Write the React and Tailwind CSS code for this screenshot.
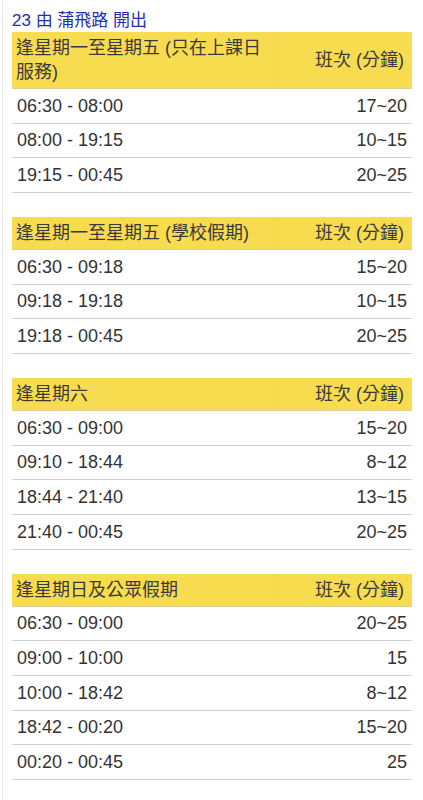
const tables = [
  {
    title: "逢星期一至星期五 (只在上課日服務)",
    rows: [
      ["06:30 - 08:00", "17~20"],
      ["08:00 - 19:15", "10~15"],
      ["19:15 - 00:45", "20~25"],
    ],
  },
  {
    title: "逢星期一至星期五 (學校假期)",
    rows: [
      ["06:30 - 09:18", "15~20"],
      ["09:18 - 19:18", "10~15"],
      ["19:18 - 00:45", "20~25"],
    ],
  },
  {
    title: "逢星期六",
    rows: [
      ["06:30 - 09:00", "15~20"],
      ["09:10 - 18:44", "8~12"],
      ["18:44 - 21:40", "13~15"],
      ["21:40 - 00:45", "20~25"],
    ],
  },
  {
    title: "逢星期日及公眾假期",
    rows: [
      ["06:30 - 09:00", "20~25"],
      ["09:00 - 10:00", "15"],
      ["10:00 - 18:42", "8~12"],
      ["18:42 - 00:20", "15~20"],
      ["00:20 - 00:45", "25"],
    ],
  },
];

function Timetable({ title, rows }) {
  return (
    <div className="w-[400px]">
      {/* Header */}
      <div className="grid grid-cols-[266px_1fr] bg-[#f8dc4f] border-b border-[#d9cf9a] text-[18px] leading-[24px] text-[#3a3a3a]">
        <div className="px-1 py-1 border-r border-[#efd54a]">{title}</div>
        <div className="pl-1 pr-2 py-1 flex items-center justify-end">班次 (分鐘)</div>
      </div>
      {rows.map(([time, freq]) => (
        <div
          key={time}
          className="grid grid-cols-[266px_1fr] h-[34.67px] items-center border-b border-[#cfcfcf] text-[18px] text-[#333]"
        >
          <div className="pl-[5px] pt-[1px]">{time}</div>
          <div className="pr-[5px] pt-[1px] text-right">{freq}</div>
        </div>
      ))}
    </div>
  );
}

export default function App() {
  return (
    <div
      className="min-h-[800px] bg-white"
      style={{ fontFamily: '"Liberation Sans", Arial, "Noto Sans CJK TC", sans-serif' }}
    >
      <div className="ml-[2px] min-h-[800px] border-l border-[#e6e6e6] pl-[9px]">
        <div className="h-8 pt-[11px] text-[17px] leading-[20px] text-[#1f2fae]">23 由 蒲飛路 開出</div>
        <div className="flex flex-col gap-6">
          {tables.map((t) => (
            <Timetable key={t.title} title={t.title} rows={t.rows} />
          ))}
        </div>
      </div>
    </div>
  );
}
